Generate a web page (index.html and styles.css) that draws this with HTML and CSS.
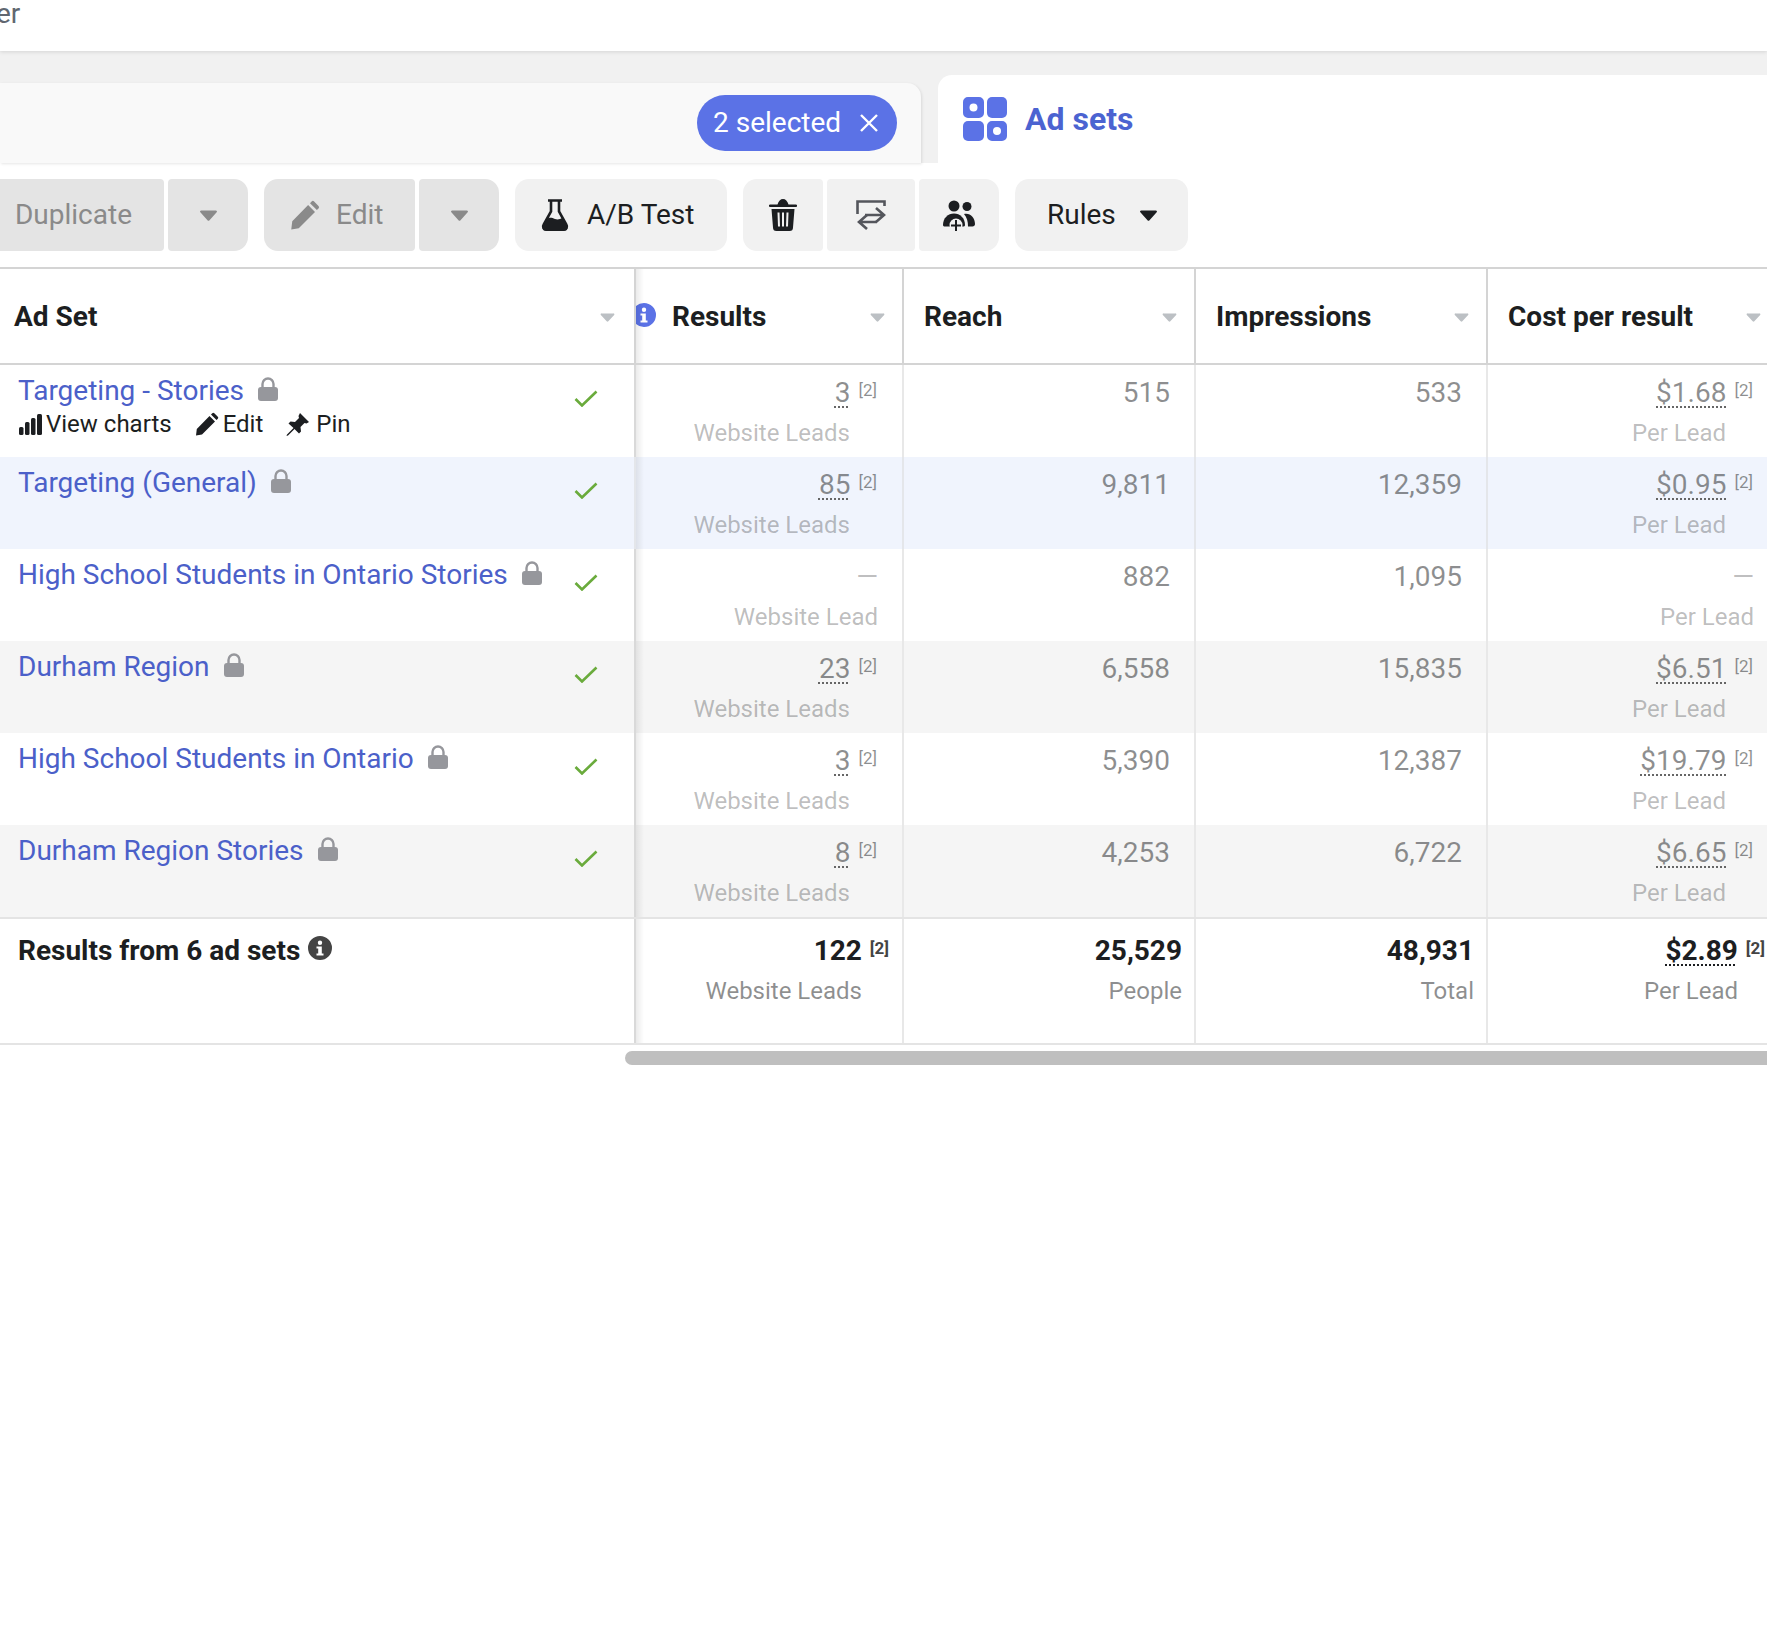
FILE: index.html
```html
<!DOCTYPE html>
<html lang="en">
<head>
    <meta charset="UTF-8">
    <title>Ad sets</title>
    <link rel="stylesheet" href="styles.css">
</head>
<body>
    <!-- shared icons -->
    <svg class="defs" width="0" height="0">
        <symbol id="caret" viewBox="0 0 20 12"><path d="M2 .5h16a1.2 1.2 0 0 1 .9 2l-7.8 8.6a1.5 1.5 0 0 1-2.2 0L1.100 2.500A1.200 1.200 0 0 1 2 .5z"/></symbol>
        <symbol id="lock" viewBox="0 0 20 24"><path d="M4.500 11V7a5.500 5.500 0 0 1 11 0v4" fill="none" stroke="currentColor" stroke-width="2.400"/><rect x="0" y="10" width="20" height="14" rx="3"/></symbol>
        <symbol id="check" viewBox="0 0 24 17"><path d="M1.500 9l6.500 6.500L22.500 1.500" fill="none" stroke="#6aab3c" stroke-width="2.600"/></symbol>
        <symbol id="pencil" viewBox="0 0 24 24"><path d="M1 23.500l.8-6.500L14.500 4l5.500 5.500L7 22.500zM16 2.500l1.300-1.300a1.400 1.400 0 0 1 2 0l3.500 3.500a1.400 1.400 0 0 1 0 2L21.500 8z"/></symbol>
        <symbol id="info" viewBox="0 0 24 24"><path fill-rule="evenodd" d="M12 0a12 12 0 1 1 0 24 12 12 0 0 1 0-24zm0 4.500a2.200 2.200 0 1 0 0 4.400 2.200 2.200 0 0 0 0-4.400zM8.500 10.500v2h1.700v5H8.500v2h7v-2h-1.700v-7z"/></symbol>
    </svg>

    <header class="topbar"><span class="crumb">er</span></header>

    <div class="tabs">
        <div class="tab-campaigns">
            <div class="pill">
                <span>2 selected</span>
                <svg class="pill-x" viewBox="0 0 20 20"><path d="M2 2l16 16M18 2L2 18" stroke="#fff" stroke-width="2.400" fill="none"/></svg>
            </div>
        </div>
        <div class="tab-adsets">
            <svg class="tab-icon" viewBox="0 0 44 44">
                <path fill-rule="evenodd" d="M5 0h11a5 5 0 0 1 5 5v11a5 5 0 0 1-5 5H5a5 5 0 0 1-5-5V5a5 5 0 0 1 5-5zm5.500 6.500a4 4 0 1 0 0 8 4 4 0 0 0 0-8z"/>
                <rect x="24" y="0" width="20" height="21" rx="5"/>
                <rect x="0" y="24" width="21" height="20" rx="5"/>
                <path fill-rule="evenodd" d="M29 24h10a5 5 0 0 1 5 5v10a5 5 0 0 1-5 5H29a5 5 0 0 1-5-5V29a5 5 0 0 1 5-5zm5 6a4 4 0 1 0 0 8 4 4 0 0 0 0-8z"/>
            </svg>
            <span>Ad sets</span>
        </div>
    </div>

    <div class="toolbar">
        <div class="btn-group">
            <button class="btn off btn-duplicate">Duplicate</button>
            <button class="btn off btn-caret"><svg class="caret-lg"><use href="#caret"/></svg></button>
        </div>
        <div class="btn-group">
            <button class="btn off btn-edit"><svg class="icon-pencil"><use href="#pencil"/></svg>Edit</button>
            <button class="btn off btn-caret"><svg class="caret-lg"><use href="#caret"/></svg></button>
        </div>
        <button class="btn btn-ab">
            <svg class="icon-flask" viewBox="0 0 28 32">
                <path d="M7 1.500h14M10 1.500v11L2.500 26a3 3 0 0 0 2.600 4.600h17.800a3 3 0 0 0 2.600-4.600L18 12.500v-11" fill="none" stroke="#1c1e21" stroke-width="2.600"/>
                <path d="M6 20c3-2 5-1 8 0s5 0 7.500-1L26 27a3 3 0 0 1-3 4.500H5A3 3 0 0 1 2 27z" fill="#1c1e21"/>
            </svg>
            A/B Test
        </button>
        <div class="btn-group">
            <button class="btn btn-trash">
                <svg class="icon-trash" viewBox="0 0 28 32">
                    <path d="M8.500 5.500C9.500 2 11.500 0 14 0s4.500 2 5.500 5.500H27a1.200 1.200 0 0 1 0 2.500H1a1.200 1.200 0 0 1 0-2.500z" fill="#1c1e21"/>
                    <path fill-rule="evenodd" d="M2.500 10h23L24 28.500a3.500 3.500 0 0 1-3.500 3.500h-13A3.500 3.500 0 0 1 4 28.500zM8.500 13.500l.5 14h2l-.5-14zm4.500 0v14h2v-14zm4.500 0l-.5 14h2l.5-14z" fill="#1c1e21"/>
                </svg>
            </button>
            <button class="btn btn-swap">
                <svg class="icon-swap" viewBox="0 0 30 30">
                    <path d="M1.500 14V1.500h27V6"/>
                    <path d="M9 15h19M20 8l8 7-8 7"/>
                    <path d="M21 22H3M11 15l-8 7 8 7"/>
                </svg>
            </button>
            <button class="btn btn-people">
                <svg class="icon-people" viewBox="0 0 32 31">
                    <circle cx="11" cy="6" r="5.500" fill="#1c1e21"/>
                    <circle cx="24" cy="6.500" r="4.500" fill="#1c1e21"/>
                    <path d="M21 14c6-1.500 11 3.500 11 10 0 1.500-1 2.500-2.500 2.500H25c0-5-1-9-4-12.500z" fill="#1c1e21"/>
                    <path d="M0 25c0-7 5-11.500 11-11.500S22 18 22 25c0 1-1 1.500-2 1.500H2c-1 0-2-.5-2-1.500z" fill="#1c1e21"/>
                    <circle cx="13" cy="25" r="6.500" fill="#f1f1f1"/>
                    <path d="M13 20v11M8 25.500h10" stroke="#1c1e21" stroke-width="2"/>
                </svg>
            </button>
        </div>
        <button class="btn btn-rules">Rules<svg class="caret-lg dark"><use href="#caret"/></svg></button>
    </div>

    <div class="table">
        <div class="table-row head">
            <div class="cell frozen"><span class="title">Ad Set</span><svg class="caret-sm"><use href="#caret"/></svg></div>
            <div class="cell head-results"><svg class="info-blue"><use href="#info"/></svg><span class="title">Results</span><svg class="caret-sm"><use href="#caret"/></svg></div>
            <div class="cell"><span class="title">Reach</span><svg class="caret-sm"><use href="#caret"/></svg></div>
            <div class="cell"><span class="title">Impressions</span><svg class="caret-sm"><use href="#caret"/></svg></div>
            <div class="cell"><span class="title">Cost per result</span><svg class="caret-sm"><use href="#caret"/></svg></div>
        </div>

        <div class="table-row body">
            <div class="cell frozen">
                <div class="name-wrap">
                    <div class="name"><a>Targeting - Stories</a><svg class="lock"><use href="#lock"/></svg></div>
                    <div class="actions">
                        <span class="action">
                            <svg class="icon-bars" viewBox="0 0 23 21"><rect x="0" y="13" width="4.500" height="8" rx="1.500"/><rect x="6" y="8" width="4.500" height="13" rx="1.500"/><rect x="12" y="4" width="4.500" height="17" rx="1.500"/><rect x="18" y="0" width="5" height="21" rx="1.500"/></svg>View charts
                        </span>
                        <span class="action"><svg class="icon-small"><use href="#pencil"/></svg>Edit</span>
                        <span class="action">
                            <svg class="icon-small" viewBox="0 0 24 24"><path d="M14 1l9 9-2.500 1.500-2-.5-4 4 .5 4.500-2 2-4.500-4.500-6.500 6.500-1.500.5.500-1.500 6.500-6.500L2.500 11.500l2-2 4.500.5 4-4-.5-2z"/></svg>Pin
                        </span>
                    </div>
                </div>
                <svg class="check"><use href="#check"/></svg>
            </div>
            <div class="cell num"><div class="val"><span class="dotted">3</span><span class="note">[2]</span></div><div class="sub noted">Website Leads</div></div>
            <div class="cell num"><div class="val">515</div></div>
            <div class="cell num"><div class="val">533</div></div>
            <div class="cell num"><div class="val"><span class="dotted">$1.68</span><span class="note">[2]</span></div><div class="sub noted">Per Lead</div></div>
        </div>

        <div class="table-row body selected">
            <div class="cell frozen">
                <div class="name-wrap"><div class="name"><a>Targeting (General)</a><svg class="lock"><use href="#lock"/></svg></div></div>
                <svg class="check"><use href="#check"/></svg>
            </div>
            <div class="cell num"><div class="val"><span class="dotted">85</span><span class="note">[2]</span></div><div class="sub noted">Website Leads</div></div>
            <div class="cell num"><div class="val">9,811</div></div>
            <div class="cell num"><div class="val">12,359</div></div>
            <div class="cell num"><div class="val"><span class="dotted">$0.95</span><span class="note">[2]</span></div><div class="sub noted">Per Lead</div></div>
        </div>

        <div class="table-row body">
            <div class="cell frozen">
                <div class="name-wrap"><div class="name"><a>High School Students in Ontario Stories</a><svg class="lock"><use href="#lock"/></svg></div></div>
                <svg class="check"><use href="#check"/></svg>
            </div>
            <div class="cell num"><div class="val empty">—</div><div class="sub">Website Lead</div></div>
            <div class="cell num"><div class="val">882</div></div>
            <div class="cell num"><div class="val">1,095</div></div>
            <div class="cell num"><div class="val empty">—</div><div class="sub">Per Lead</div></div>
        </div>

        <div class="table-row body striped">
            <div class="cell frozen">
                <div class="name-wrap"><div class="name"><a>Durham Region</a><svg class="lock"><use href="#lock"/></svg></div></div>
                <svg class="check"><use href="#check"/></svg>
            </div>
            <div class="cell num"><div class="val"><span class="dotted">23</span><span class="note">[2]</span></div><div class="sub noted">Website Leads</div></div>
            <div class="cell num"><div class="val">6,558</div></div>
            <div class="cell num"><div class="val">15,835</div></div>
            <div class="cell num"><div class="val"><span class="dotted">$6.51</span><span class="note">[2]</span></div><div class="sub noted">Per Lead</div></div>
        </div>

        <div class="table-row body">
            <div class="cell frozen">
                <div class="name-wrap"><div class="name"><a>High School Students in Ontario</a><svg class="lock"><use href="#lock"/></svg></div></div>
                <svg class="check"><use href="#check"/></svg>
            </div>
            <div class="cell num"><div class="val"><span class="dotted">3</span><span class="note">[2]</span></div><div class="sub noted">Website Leads</div></div>
            <div class="cell num"><div class="val">5,390</div></div>
            <div class="cell num"><div class="val">12,387</div></div>
            <div class="cell num"><div class="val"><span class="dotted">$19.79</span><span class="note">[2]</span></div><div class="sub noted">Per Lead</div></div>
        </div>

        <div class="table-row body striped">
            <div class="cell frozen">
                <div class="name-wrap"><div class="name"><a>Durham Region Stories</a><svg class="lock"><use href="#lock"/></svg></div></div>
                <svg class="check"><use href="#check"/></svg>
            </div>
            <div class="cell num"><div class="val"><span class="dotted">8</span><span class="note">[2]</span></div><div class="sub noted">Website Leads</div></div>
            <div class="cell num"><div class="val">4,253</div></div>
            <div class="cell num"><div class="val">6,722</div></div>
            <div class="cell num"><div class="val"><span class="dotted">$6.65</span><span class="note">[2]</span></div><div class="sub noted">Per Lead</div></div>
        </div>

        <div class="table-row foot">
            <div class="cell frozen"><span class="foot-name">Results from 6 ad sets</span><svg class="info-dark"><use href="#info"/></svg></div>
            <div class="cell num"><div class="val">122<span class="note">[2]</span></div><div class="sub noted">Website Leads</div></div>
            <div class="cell num"><div class="val">25,529</div><div class="sub">People</div></div>
            <div class="cell num"><div class="val">48,931</div><div class="sub">Total</div></div>
            <div class="cell num"><div class="val"><span class="dotted">$2.89</span><span class="note">[2]</span></div><div class="sub noted">Per Lead</div></div>
        </div>
    </div>

    <div class="scrollbar"></div>
</body>
</html>
```
FILE: styles.css
```css
html, body {
    overflow: hidden;
}
body {
    margin: 0;
    width: 1767px;
    height: 1625px;
    background: #fff;
    color: #1c1e21;
    font-family: Roboto, "Liberation Sans", sans-serif;
    font-size: 28px;
}
.defs { position: absolute; }
svg { display: block; fill: currentColor; flex: none; }

.topbar {
    height: 51px;
    position: relative;
    z-index: 2;
    background: #fff;
    box-shadow: 0 1px 4px rgba(0,0,0,0.12);
}
.crumb {
    display: block;
    margin-left: -4px;
    line-height: 28px;
    color: #606770;
    font-size: 28px;
}

.tabs {
    display: flex;
    height: 112px;
    background: #f1f1f1;
}
.tab-campaigns {
    display: flex;
    align-items: center;
    justify-content: flex-end;
    width: 921px;
    height: 80px;
    margin-top: 32px;
    padding-right: 24px;
    box-sizing: border-box;
    background: #f9f9f9;
    border-top-right-radius: 14px;
    box-shadow: 1px 1px 3px rgba(0,0,0,0.1);
}
.pill {
    display: flex;
    align-items: center;
    gap: 18px;
    height: 56px;
    width: 200px;
    padding: 0 0 2px 16px;
    box-sizing: border-box;
    border-radius: 28px;
    background: #5b72e6;
    color: #fff;
}
.pill-x { width: 20px; height: 20px; margin-top: 2px; }
.tab-adsets {
    flex: 1;
    display: flex;
    align-items: flex-start;
    gap: 18px;
    margin: 24px 0 0 17px;
    padding: 22px 0 0 25px;
    background: #fff;
    border-top-left-radius: 14px;
    color: #4b63d1;
    font-size: 32px;
    font-weight: 700;
    line-height: 44px;
}
.tab-icon { width: 44px; height: 44px; fill: #5b72e6; }

.toolbar {
    display: flex;
    gap: 16px;
    height: 104px;
    padding-top: 16px;
    box-sizing: border-box;
    margin-left: -40px;
}
.btn-group { display: flex; gap: 4px; }
.btn {
    display: flex;
    align-items: center;
    justify-content: center;
    box-sizing: border-box;
    height: 72px;
    padding: 0 0 2px;
    border: none;
    border-radius: 4px;
    background: #f1f1f1;
    color: #1c1e21;
    font: inherit;
}
.btn svg { margin-top: 2px; }
.off { background: #e4e4e4; color: #8a8a8a; }
.btn-group .btn:first-child { border-radius: 14px 4px 4px 14px; }
.btn-group .btn:last-child { border-radius: 4px 14px 14px 4px; }
.btn-duplicate { width: 204px; justify-content: flex-end; padding-right: 32px; }
.btn-caret { width: 80px; }
.btn-edit { width: 151px; gap: 16px; justify-content: flex-start; padding-left: 26px; }
.btn-ab { width: 212px; gap: 18px; justify-content: flex-start; padding-left: 26px; border-radius: 14px; }
.btn-trash { width: 80px; }
.btn-swap { width: 88px; }
.btn-people { width: 80px; }
.btn-rules { width: 173px; gap: 23px; justify-content: flex-start; padding-left: 32px; border-radius: 14px; }
.caret-lg { width: 19px; height: 11px; }
.caret-lg.dark { fill: #1c1e21; }
.icon-pencil { width: 30px; height: 30px; }
.icon-flask { width: 28px; height: 32px; }
.icon-trash { width: 28px; height: 32px; }
.icon-swap { width: 30px; height: 30px; fill: none; stroke: #54565c; stroke-width: 2.6; }
.icon-people { width: 32px; height: 31px; }

.table {
    width: 1780px;
    border-top: 2px solid #d4d4d4;
}
.table-row {
    display: grid;
    grid-template-columns: 636px 268px 292px 292px 292px;
}
.cell {
    box-sizing: border-box;
    border-right: 2px solid #e8e8e8;
}
.frozen {
    position: relative;
    z-index: 1;
    background: #fff;
    border-right-color: #d9d9d9;
}
/* shadow of the frozen column over the scrolling ones */
.frozen::after {
    content: "";
    position: absolute;
    top: 0;
    bottom: 0;
    left: 100%;
    margin-left: 2px;
    width: 8px;
    background: linear-gradient(to right, rgba(0,0,0,0.08), rgba(0,0,0,0));
}

.head {
    height: 94px;
    border-bottom: 2px solid #d4d4d4;
}
.head .cell {
    display: flex;
    align-items: center;
    justify-content: space-between;
    padding: 0 17px 0 20px;
    border-right-color: #d4d4d4;
}
.head .frozen { padding-left: 14px; padding-right: 19px; }
.title { font-size: 28px; font-weight: 700; }
.caret-sm { width: 15px; height: 9px; fill: #bcc0c4; margin-top: 3px; }
.head-results { overflow: hidden; }
.head .head-results { justify-content: flex-start; padding-left: 0; }
.head-results .caret-sm { margin-left: auto; }
.info-blue { width: 24px; height: 24px; margin: -2px 16px 0 -4px; fill: #5b72e6; }

.body { height: 92px; }
.body .frozen {
    display: flex;
    justify-content: space-between;
    padding: 8px 36px 0 18px;
}
.selected { background: #f0f4fd; }
.selected .frozen { background: #f0f4fd; }
.selected .cell { border-right-color: #e4e6ea; }
.striped { background: #f5f5f5; }
.striped .frozen { background: #f5f5f5; }
.name {
    display: flex;
    align-items: flex-start;
    gap: 14px;
    line-height: 36px;
    color: #4b60c9;
}
.lock { width: 20px; height: 24px; margin-top: 4px; fill: #96979c; color: #96979c; }
.check { width: 24px; height: 17px; margin-top: 17px; }
.actions {
    display: flex;
    gap: 23px;
    padding-left: 1px;
    line-height: 30px;
    font-size: 24px;
}
.action { display: flex; align-items: center; gap: 4px; }
.action:last-child { gap: 6px; }
.icon-bars { width: 23px; height: 21px; }
.icon-small { width: 24px; height: 24px; }

.num {
    padding: 10px 24px 0 0;
    text-align: right;
}
.val {
    line-height: 36px;
    color: rgba(28,30,33,0.5);
}
.val.empty { color: rgba(28,30,33,0.3); }
.dotted {
    text-decoration: underline dotted 2px #666;
    text-underline-offset: 4px;
}
.note {
    margin: 0 1px 0 8px;
    font-size: 17px;
    line-height: 0;
    vertical-align: 6px;
}
.sub {
    margin-top: 6px;
    line-height: 32px;
    font-size: 24px;
    color: rgba(28,30,33,0.3);
}
.sub.noted { margin-right: 28px; }

.foot {
    height: 124px;
    border-top: 2px solid #e4e4e4;
    border-bottom: 2px solid #e4e4e4;
}
.foot .frozen {
    display: flex;
    align-items: flex-start;
    gap: 8px;
    padding: 14px 0 0 18px;
}
.foot-name { font-weight: 700; line-height: 36px; font-size: 28px; }
.info-dark { width: 24px; height: 24px; margin-top: 3px; fill: #444; }
.foot .num { padding: 14px 12px 0 0; }
.foot .val { font-weight: 700; color: #1c1e21; }
.foot .note { font-weight: 700; color: #444; }
.foot .dotted { text-decoration-color: #1c1e21; }
.foot .sub { margin-top: 6px; color: rgba(28,30,33,0.5); }

.scrollbar {
    height: 14px;
    margin: 6px 0 0 625px;
    border-radius: 7px 0 0 7px;
    background: #bfbfbf;
}
```
